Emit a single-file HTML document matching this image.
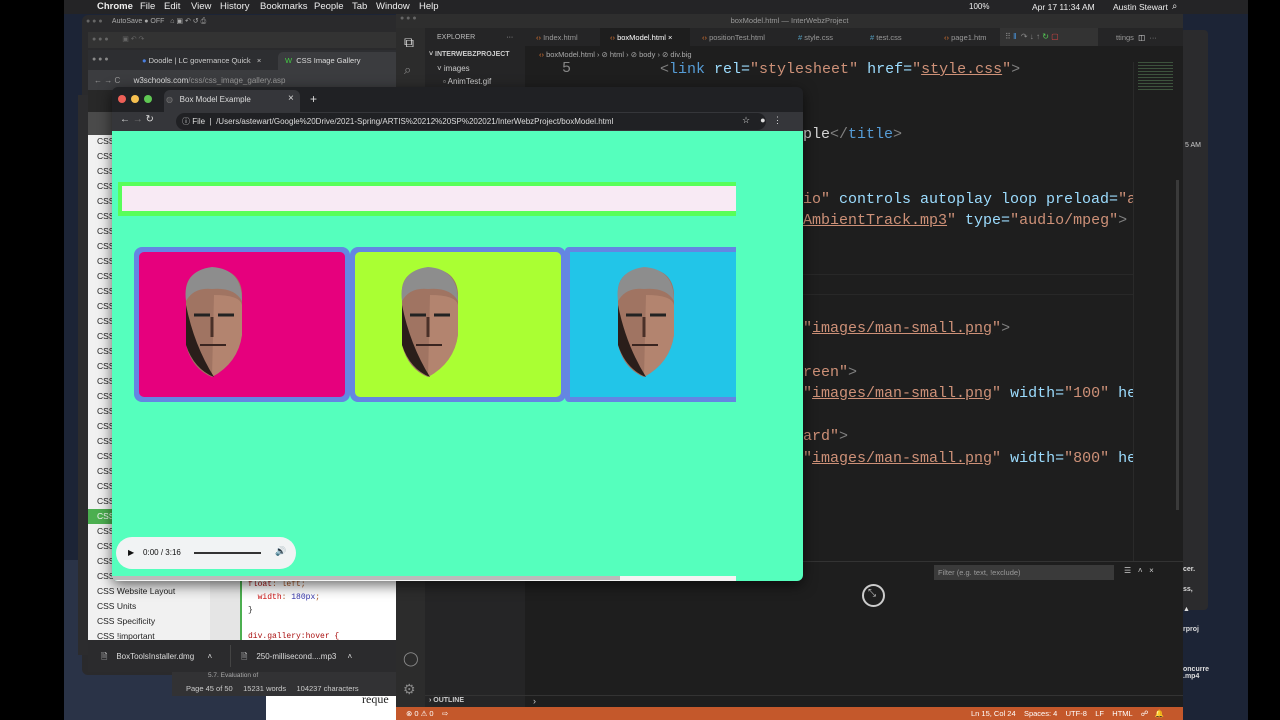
<!DOCTYPE html>
<html><head><meta charset="utf-8"><style>
*{margin:0;padding:0;box-sizing:border-box}
body{width:1280px;height:720px;overflow:hidden;background:#000;font-family:"Liberation Sans",sans-serif;position:relative}
.a{position:absolute}
.mono{font-family:"Liberation Mono",monospace}
.t{white-space:nowrap}
.dot{position:absolute;width:8px;height:8px;border-radius:50%}
</style></head><body>
<!-- desktop -->
<div class="a" style="left:64px;top:0;width:1184px;height:720px;background:#1c2436"></div>
<div class="a" style="left:64px;top:560px;width:220px;height:160px;background:#2a3347"></div>
<!-- menubar -->
<div class="a t" style="left:64px;top:0;width:1184px;height:14px;background:#242426;color:#eee;font-size:9.5px;line-height:14px">
 <span class="a" style="left:12px;font-size:10px"></span>
 <span class="a" style="left:33px;font-weight:bold">Chrome</span>
 <span class="a" style="left:76px">File</span><span class="a" style="left:100px">Edit</span><span class="a" style="left:127px">View</span><span class="a" style="left:156px">History</span><span class="a" style="left:196px">Bookmarks</span><span class="a" style="left:250px">People</span><span class="a" style="left:288px">Tab</span><span class="a" style="left:312px">Window</span><span class="a" style="left:355px">Help</span>
 <span class="a" style="left:905px;font-size:8px">100%</span><span class="a" style="left:968px;font-size:8.5px">Apr 17 11:34 AM</span><span class="a" style="left:1049px;font-size:8.5px">Austin Stewart</span><span class="a" style="left:1108px">⌕</span>
</div>
<!-- back word windows -->
<div class="a" style="left:82px;top:15px;width:320px;height:660px;background:#2a2a2c;border-radius:6px"></div>
<div class="a t" style="left:86px;top:17px;font-size:7px;color:#aaa"><span style="color:#666">● ● ●</span> &nbsp; &nbsp; AutoSave ● OFF &nbsp; ⌂ ▣ ↶ ↺ ⎙</div>
<div class="a" style="left:88px;top:32px;width:312px;height:16px;background:#333"></div>
<div class="a t" style="left:92px;top:35px;font-size:7px;color:#666">● ● ● &nbsp; &nbsp; &nbsp; ▣ ↶ ↷</div>
<!-- back chrome -->
<div class="a" style="left:88px;top:50px;width:312px;height:40px;background:#2d2e31"></div>
<div class="a t" style="left:92px;top:56px;font-size:7px;color:#888">● ● ●</div>
<div class="a t" style="left:142px;top:56px;font-size:7.5px;color:#ccc"><span style="color:#4a7fe0">●</span> Doodle | LC governance Quick &nbsp; ×</div>
<div class="a" style="left:278px;top:52px;width:122px;height:18px;background:#3b3c3f;border-radius:5px 5px 0 0"></div>
<div class="a t" style="left:285px;top:56px;font-size:7.5px;color:#ddd"><span style="color:#4c4">W</span> &nbsp;CSS Image Gallery</div>
<div class="a" style="left:88px;top:70px;width:312px;height:20px;background:#3b3c3f"></div>
<div class="a t" style="left:94px;top:76px;font-size:8px;color:#999">← → C &nbsp;&nbsp;&nbsp;&nbsp;&nbsp;<span style="color:#ddd">w3schools.com</span>/css/css_image_gallery.asp</div>
<!-- w3 sidebar -->
<div class="a" style="left:78px;top:95px;width:10px;height:560px;background:#2c2c2e"></div>
<div class="a" style="left:88px;top:110px;width:24px;height:25px;background:#4a4a4a"></div>
<div class="a" style="left:88px;top:90px;width:24px;height:22px;background:#282828"></div>
<div class="a" style="left:88px;top:135px;width:122px;height:505px;background:#f1f1f1"></div>
<div class="a" style="left:88px;top:509px;width:24px;height:15px;background:#4caf50"></div>
<div class="a" style="left:210px;top:580px;width:30px;height:60px;background:#e5e5e5"></div>
<div class="a" style="left:240px;top:580px;width:160px;height:60px;background:#fff;border-left:2px solid #4caf50"></div>
<div class="a t mono" style="left:248px;top:578px;font-size:8px;line-height:13px;color:#a52"><span style="color:#a11">  float</span>: left;<br>&nbsp;&nbsp;<span style="color:#c11">width</span>: <span style="color:#33a">180px</span>;<br><span style="color:#333">}</span><br><br><span style="color:#a11">div.gallery:hover {</span></div>
<div class="a t" style="left:97px;top:134px;font-size:8.5px;line-height:15px;color:#222">CSS<br>CSS<br>CSS<br>CSS<br>CSS<br>CSS<br>CSS<br>CSS<br>CSS<br>CSS<br>CSS<br>CSS<br>CSS<br>CSS<br>CSS<br>CSS<br>CSS<br>CSS<br>CSS<br>CSS<br>CSS<br>CSS<br>CSS<br>CSS<br>CSS<br><span style="color:#fff">CSS</span><br>CSS<br>CSS<br>CSS<br>CSS<br>CSS Website Layout<br>CSS Units<br>CSS Specificity<br>CSS !important</div>
<!-- downloads bar -->
<div class="a" style="left:88px;top:640px;width:312px;height:32px;background:#2b2b2d"></div>
<div class="a t" style="left:101px;top:651px;font-size:8px;color:#ddd">🗎 &nbsp;&nbsp; BoxToolsInstaller.dmg &nbsp;&nbsp;&nbsp;&nbsp; ˄</div>
<div class="a t" style="left:241px;top:651px;font-size:8px;color:#ddd">🗎 &nbsp;&nbsp; 250-millisecond....mp3 &nbsp;&nbsp;&nbsp; ˄</div>
<div class="a" style="left:230px;top:645px;width:1px;height:22px;background:#444"></div>
<div class="a" style="left:172px;top:672px;width:228px;height:24px;background:#323234"></div>
<div class="a t" style="left:186px;top:684px;font-size:7.5px;color:#ccc">Page 45 of 50 &nbsp;&nbsp;&nbsp; 15231 words &nbsp;&nbsp;&nbsp; 104237 characters</div>
<div class="a t" style="left:208px;top:672px;font-size:6.5px;color:#aaa">5.7. Evaluation of</div>
<div class="a" style="left:266px;top:696px;width:134px;height:24px;background:#fff"></div>
<div class="a t" style="left:362px;top:692px;font-size:12px;color:#222;font-family:'Liberation Serif',serif">reque</div>

<!-- right desktop panel -->
<div class="a" style="left:1180px;top:30px;width:28px;height:580px;background:#2b2b2d;border-radius:4px"></div>
<div class="a t" style="left:1185px;top:142px;font-size:7px;color:#ccc">5 AM</div>
<div class="a t" style="left:1183px;top:560px;font-size:7px;color:#ddd;font-weight:bold;line-height:20px">cer.<br>ss,<br>▲<br>rproj</div>
<div class="a t" style="left:1183px;top:666px;font-size:7px;color:#ddd;font-weight:bold">oncurre<br>.mp4</div>

<!-- VS Code -->
<div class="a" style="left:396px;top:14px;width:787px;height:706px;background:#1e1e1e"></div>
<div class="a" style="left:396px;top:14px;width:787px;height:14px;background:#2e2e2e"></div>
<div class="a t" style="left:396px;top:16px;width:787px;text-align:center;font-size:7.5px;color:#999">boxModel.html — InterWebzProject</div>
<div class="a t" style="left:400px;top:15px;font-size:7px;color:#666">● ● ●</div>
<div class="a" style="left:396px;top:28px;width:29px;height:679px;background:#2c2c2c"></div>
<div class="a t" style="left:404px;top:34px;font-size:14px;color:#ddd">⧉</div>
<div class="a t" style="left:404px;top:62px;font-size:13px;color:#888">⌕</div>
<div class="a t" style="left:403px;top:650px;font-size:14px;color:#888">◯</div>
<div class="a t" style="left:403px;top:681px;font-size:14px;color:#888">⚙</div>
<div class="a" style="left:425px;top:28px;width:100px;height:679px;background:#252526"></div>
<div class="a t" style="left:437px;top:34px;font-size:7px;color:#bbb">EXPLORER &nbsp;&nbsp;&nbsp;&nbsp;&nbsp;&nbsp;&nbsp;&nbsp;&nbsp;&nbsp;&nbsp;&nbsp;&nbsp;&nbsp; ···</div>
<div class="a t" style="left:429px;top:51px;font-size:7px;color:#ccc;font-weight:bold">˅ INTERWEBZPROJECT</div>
<div class="a t" style="left:437px;top:64px;font-size:8px;color:#ccc">˅ images</div>
<div class="a t" style="left:443px;top:77px;font-size:8px;color:#ccc">▫ AnimTest.gif</div>
<div class="a" style="left:425px;top:695px;width:100px;height:12px;border-top:1px solid #333"></div>
<div class="a t" style="left:429px;top:697px;font-size:7px;color:#ccc;font-weight:bold">› OUTLINE</div>
<!-- tabs -->
<div class="a" style="left:525px;top:28px;width:658px;height:18px;background:#252526"></div>
<div class="a" style="left:600px;top:28px;width:90px;height:18px;background:#1e1e1e"></div>
<div class="a t" style="left:536px;top:33px;font-size:7.5px;color:#999"><span style="color:#e37933">‹›</span> Index.html</div>
<div class="a t" style="left:610px;top:33px;font-size:7.5px;color:#fff"><span style="color:#e37933">‹›</span> boxModel.html ×</div>
<div class="a t" style="left:702px;top:33px;font-size:7.5px;color:#999"><span style="color:#e37933">‹›</span> positionTest.html</div>
<div class="a t" style="left:798px;top:33px;font-size:7.5px;color:#999"><span style="color:#519aba">#</span> style.css</div>
<div class="a t" style="left:870px;top:33px;font-size:7.5px;color:#999"><span style="color:#519aba">#</span> test.css</div>
<div class="a t" style="left:944px;top:33px;font-size:7.5px;color:#999"><span style="color:#e37933">‹›</span> page1.htm</div>
<div class="a" style="left:1000px;top:28px;width:98px;height:18px;background:#333"></div>
<div class="a t" style="left:1005px;top:32px;font-size:8px;color:#888">⠿ <span style="color:#4a9be8">‖</span> &nbsp;↷ ↓ ↑ <span style="color:#5c5">↻</span> <span style="color:#d44">▢</span></div>
<div class="a t" style="left:1116px;top:33px;font-size:7.5px;color:#999">ttings &nbsp;<span style="color:#ddd">◫</span> &nbsp;···</div>
<div class="a t" style="left:539px;top:50px;font-size:7.5px;color:#aaa"><span style="color:#e37933">‹›</span> boxModel.html › ⊘ html › ⊘ body › ⊘ div.big</div>
<!-- editor code -->
<div class="a t mono" style="left:562px;top:60px;font-size:15px;color:#858585">5</div>
<div class="a t mono" style="left:660px;top:59px;font-size:15px;line-height:21.6px;color:#9cdcfe">
<span style="color:#808080">&lt;</span><span style="color:#569cd6">link</span> rel=<span style="color:#ce9178">"stylesheet"</span> href=<span style="color:#ce9178">"<u>style.css</u>"</span><span style="color:#808080">&gt;</span></div>
<div class="a t mono" style="left:803px;top:124px;font-size:15px;line-height:21.6px;color:#9cdcfe">
<span style="color:#d4d4d4">ple</span><span style="color:#808080">&lt;/</span><span style="color:#569cd6">title</span><span style="color:#808080">&gt;</span><br><br><br>
<span style="color:#ce9178">io"</span> controls autoplay loop preload=<span style="color:#ce9178">"au</span><br>
<span style="color:#ce9178"><u>AmbientTrack.mp3</u>"</span> type=<span style="color:#ce9178">"audio/mpeg"</span><span style="color:#808080">&gt;</span><br><br><br><br><br>
<span style="color:#ce9178">"<u>images/man-small.png</u>"</span><span style="color:#808080">&gt;</span><br><br>
<span style="color:#ce9178">reen"</span><span style="color:#808080">&gt;</span><br>
<span style="color:#ce9178">"<u>images/man-small.png</u>"</span> width=<span style="color:#ce9178">"100"</span> hei<br><br>
<span style="color:#ce9178">ard"</span><span style="color:#808080">&gt;</span><br>
<span style="color:#ce9178">"<u>images/man-small.png</u>"</span> width=<span style="color:#ce9178">"800"</span> hei</div>
<div class="a" style="left:803px;top:274px;width:330px;height:21px;border-top:1px solid #282828;border-bottom:1px solid #282828"></div>
<div class="a" style="left:1133px;top:62px;width:47px;height:500px;background:#1e1e1e;border-left:1px solid #2a2a2a"></div>
<div class="a" style="left:1138px;top:62px;width:35px;height:30px;background:repeating-linear-gradient(#4a6a4a 0 1px,transparent 1px 3px);opacity:.7"></div>
<div class="a" style="left:1176px;top:180px;width:3px;height:330px;background:#3a3a3a"></div>
<!-- panel -->
<div class="a" style="left:525px;top:561px;width:658px;height:1px;background:#333"></div>
<div class="a" style="left:934px;top:565px;width:180px;height:15px;background:#3a3a3a"></div>
<div class="a t" style="left:938px;top:568px;font-size:7.5px;color:#999">Filter (e.g. text, !exclude)</div>
<div class="a t" style="left:1124px;top:566px;font-size:8px;color:#ccc">☰ &nbsp;&nbsp;˄ &nbsp;&nbsp;×</div>
<div class="a" style="left:862px;top:584px;width:23px;height:23px;border:2px double #ccc;border-radius:50%"></div>
<div class="a t" style="left:868px;top:588px;font-size:10px;color:#ccc">⤡</div>
<div class="a" style="left:525px;top:695px;width:658px;height:1px;background:#333"></div>
<div class="a t" style="left:533px;top:696px;font-size:9px;color:#ccc">›</div>
<!-- status bar -->
<div class="a" style="left:396px;top:707px;width:787px;height:13px;background:#c4582b"></div>
<div class="a t" style="left:406px;top:709px;font-size:7.5px;color:#fff">⊗ 0 ⚠ 0 &nbsp;&nbsp; ⇨</div>
<div class="a t" style="left:971px;top:709px;font-size:7.5px;color:#fff">Ln 15, Col 24 &nbsp;&nbsp; Spaces: 4 &nbsp;&nbsp; UTF-8 &nbsp;&nbsp; LF &nbsp;&nbsp; HTML &nbsp;&nbsp; ☍ &nbsp; 🔔</div>

<!-- FRONT CHROME -->
<div class="a" style="left:112px;top:87px;width:691px;height:494px;background:#202124;border-radius:6px;overflow:hidden;box-shadow:0 4px 14px rgba(0,0,0,.6)">
 <div class="dot" style="left:6px;top:8px;background:#ed5f57"></div>
 <div class="dot" style="left:19px;top:8px;background:#f5bf4f"></div>
 <div class="dot" style="left:32px;top:8px;background:#5fc753"></div>
 <div class="a" style="left:52px;top:3px;width:136px;height:22px;background:#35363a;border-radius:6px 6px 0 0"></div>
 <div class="a t" style="left:54px;top:8px;font-size:8px;color:#ddd"><span style="color:#777">◍</span> &nbsp; Box Model Example</div>
 <div class="a t" style="left:176px;top:6px;font-size:10px;color:#ddd">×</div>
 <div class="a t" style="left:198px;top:5px;font-size:12px;color:#ddd">+</div>
 <div class="a" style="left:0;top:25px;width:691px;height:19px;background:#35363a"></div>
 <div class="a t" style="left:8px;top:27px;font-size:10px;color:#ddd">← <span style="color:#777">→</span> ↻</div>
 <div class="a" style="left:64px;top:26px;width:590px;height:17px;background:#202124;border-radius:9px"></div>
 <div class="a t" style="left:70px;top:29px;font-size:8px;color:#ddd">ⓘ File &nbsp;| &nbsp;/Users/astewart/Google%20Drive/2021-Spring/ARTIS%20212%20SP%202021/InterWebzProject/boxModel.html</div>
 <div class="a t" style="left:630px;top:28px;font-size:9px;color:#ddd">☆ &nbsp;&nbsp; ● &nbsp; ⋮</div>
 <div class="a" style="left:0;top:44px;width:691px;height:450px;background:#55ffbd">
  <div class="a" style="left:6px;top:51px;width:618px;height:34px;background:#58fe5a"></div>
  <div class="a" style="left:10px;top:55px;width:614px;height:25px;background:#f8eaf4"></div>
  <!-- cards -->
  <div class="a" style="left:22px;top:116px;width:216px;height:155px;background:#6486e2;border-radius:8px;padding:5px"><div style="width:100%;height:100%;background:#e6007d;border-radius:5px"></div></div>
  <div class="a" style="left:238px;top:116px;width:216px;height:155px;background:#6486e2;border-radius:8px;padding:5px"><div style="width:100%;height:100%;background:#aaff33;border-radius:5px"></div></div>
  <div class="a" style="left:453px;top:116px;width:171px;height:155px;background:#6486e2;border-radius:4px 0 0 4px;padding:5px 0 5px 5px"><div style="width:100%;height:100%;background:#22c5e8"></div></div>
  <svg class="a" style="left:62px;top:134px" width="78" height="116" viewBox="0 0 78 116"><g id="f"><path d="M12 30 Q10 6 38 3 Q66 4 68 28 L68 70 Q64 98 38 112 Q18 104 12 80 Z" fill="#a07462"/><path d="M40 30 Q66 30 68 40 L68 70 Q64 98 38 112 Z" fill="#c09078" opacity=".6"/><path d="M12 36 Q8 6 38 2 Q68 4 68 36 Q60 22 38 24 Q20 22 12 36Z" fill="#8d8d8d"/><path d="M20 50 h16 M44 50 h16" stroke="#222" stroke-width="3"/><path d="M26 80 h26" stroke="#3a2520" stroke-width="2"/><path d="M38 52 v20" stroke="#4a3028" stroke-width="3"/><path d="M12 40 Q20 80 40 112 Q20 104 12 80Z" fill="#2a1e1a"/></g></svg>
  <svg class="a" style="left:278px;top:134px" width="78" height="116" viewBox="0 0 78 116"><use href="#f"/></svg>
  <svg class="a" style="left:494px;top:134px" width="78" height="116" viewBox="0 0 78 116"><use href="#f"/></svg>
  <!-- audio -->
  <div class="a" style="left:4px;top:406px;width:180px;height:32px;background:#f1f3f4;border-radius:16px"></div>
  <div class="a t" style="left:16px;top:417px;font-size:8px;color:#111">▶ &nbsp;&nbsp; 0:00 / 3:16</div>
  <div class="a" style="left:82px;top:421px;width:67px;height:2px;background:#333"></div>
  <div class="a t" style="left:163px;top:415px;font-size:9px;color:#111">🔊</div>
  <div class="a" style="left:0;top:445px;width:624px;height:5px;background:#f4f4f4"></div>
  <div class="a" style="left:0;top:445px;width:508px;height:4px;background:#bbb"></div>
 </div>
</div>
</body></html>
